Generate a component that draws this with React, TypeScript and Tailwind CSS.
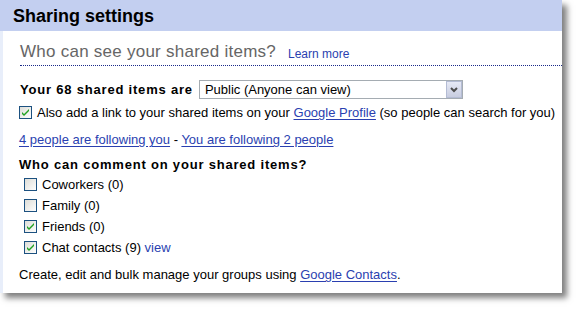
import React from "react";

const font = { fontFamily: '"Liberation Sans", Arial, sans-serif' };

function Check({ checked }: { checked?: boolean }) {
  return (
    <svg width="13" height="13" viewBox="0 0 13 13" className="shrink-0">
      <defs>
        <linearGradient id="cbg" x1="0" y1="0" x2="1" y2="1">
          <stop offset="0" stopColor="#dcdcd6" />
          <stop offset="1" stopColor="#ffffff" />
        </linearGradient>
      </defs>
      <rect x="0.5" y="0.5" width="12" height="12" fill="url(#cbg)" stroke="#1c5180" />
      {checked && (
        <path d="M3 6 L5 8 L10 3 L10 5 L5 10 L3 8 Z" fill="#21a121" />
      )}
    </svg>
  );
}

function Link({ children }: { children: React.ReactNode }) {
  return <a className="text-[#2a3fb0] underline underline-offset-2">{children}</a>;
}

export default function App() {
  const groups = [
    { name: "Coworkers (0)", on: false },
    { name: "Family (0)", on: false },
    { name: "Friends (0)", on: true },
    { name: "Chat contacts (9)", on: true, view: true },
  ];

  return (
    <div className="w-[578px] h-[310px] bg-white" style={font}>
      <div className="w-[562px] h-[293px] bg-white flex flex-col shadow-[5px_5px_6px_rgba(0,0,0,0.5)]">
        <div className="h-[31px] shrink-0 bg-[#c3cff0] flex items-center pl-[13px] pt-[1px]">
          <span className="text-[18px] font-bold text-black leading-none">Sharing settings</span>
        </div>
        <div className="flex flex-1 min-h-0">
          <div className="w-[3px] bg-[#e8eefa]" />
          <div className="flex-1 pl-[17px] text-[13px] leading-[15px] text-black">
            <div className="flex items-end h-[35px] pb-[5px] border-b border-dotted border-[#1a2a8a]">
              <span className="text-[17px] text-[#666] tracking-[0.25px] leading-none">Who can see your shared items?</span>
              <span className="ml-3 text-[12px] text-[#2a3fb0] leading-none">Learn more</span>
            </div>
            <div className="flex items-center mt-[14px] h-[19px]">
              <span className="font-bold tracking-[0.8px]">Your 68 shared items are</span>
              <div className="ml-[6px] w-[264px] h-[19px] border border-[#a5acb2] flex items-center justify-between">
                <span className="pl-[5px]">Public (Anyone can view)</span>
                <div className="w-[16px] h-[17px] bg-gradient-to-b from-[#e6e9f5] to-[#c8cde0] border border-[#b4bcd4] flex items-center justify-center">
                  <svg width="8" height="6" viewBox="0 0 8 6">
                    <path d="M1 1 L4 4 L7 1" stroke="#4d4d4d" strokeWidth="2" fill="none" />
                  </svg>
                </div>
              </div>
            </div>
            <div className="flex items-center mt-[6px] h-[15px] -ml-[1px] gap-[5px] whitespace-nowrap">
              <Check checked />
              <span>
                Also add a link to your shared items on your <Link>Google Profile</Link> (so people can search for you)
              </span>
            </div>
            <div className="mt-[12px] h-[15px] -ml-[1px]">
              <Link>4 people are following you</Link> - <Link>You are following 2 people</Link>
            </div>
            <div className="mt-[10px] h-[15px] -ml-[1px] font-bold tracking-[0.8px]">
              Who can comment on your shared items?
            </div>
            <div className="flex flex-col gap-[6px] mt-[5px] pl-[4px]">
              {groups.map((g) => (
                <div key={g.name} className="flex items-center gap-[5px] h-[15px]">
                  <Check checked={g.on} />
                  <span>
                    {g.name}
                    {g.view && <span className="text-[#2a3fb0]"> view</span>}
                  </span>
                </div>
              ))}
            </div>
            <div className="mt-[12px] h-[15px] -ml-[1px]">
              Create, edit and bulk manage your groups using <Link>Google Contacts</Link>.
            </div>
          </div>
        </div>
      </div>
    </div>
  );
}
